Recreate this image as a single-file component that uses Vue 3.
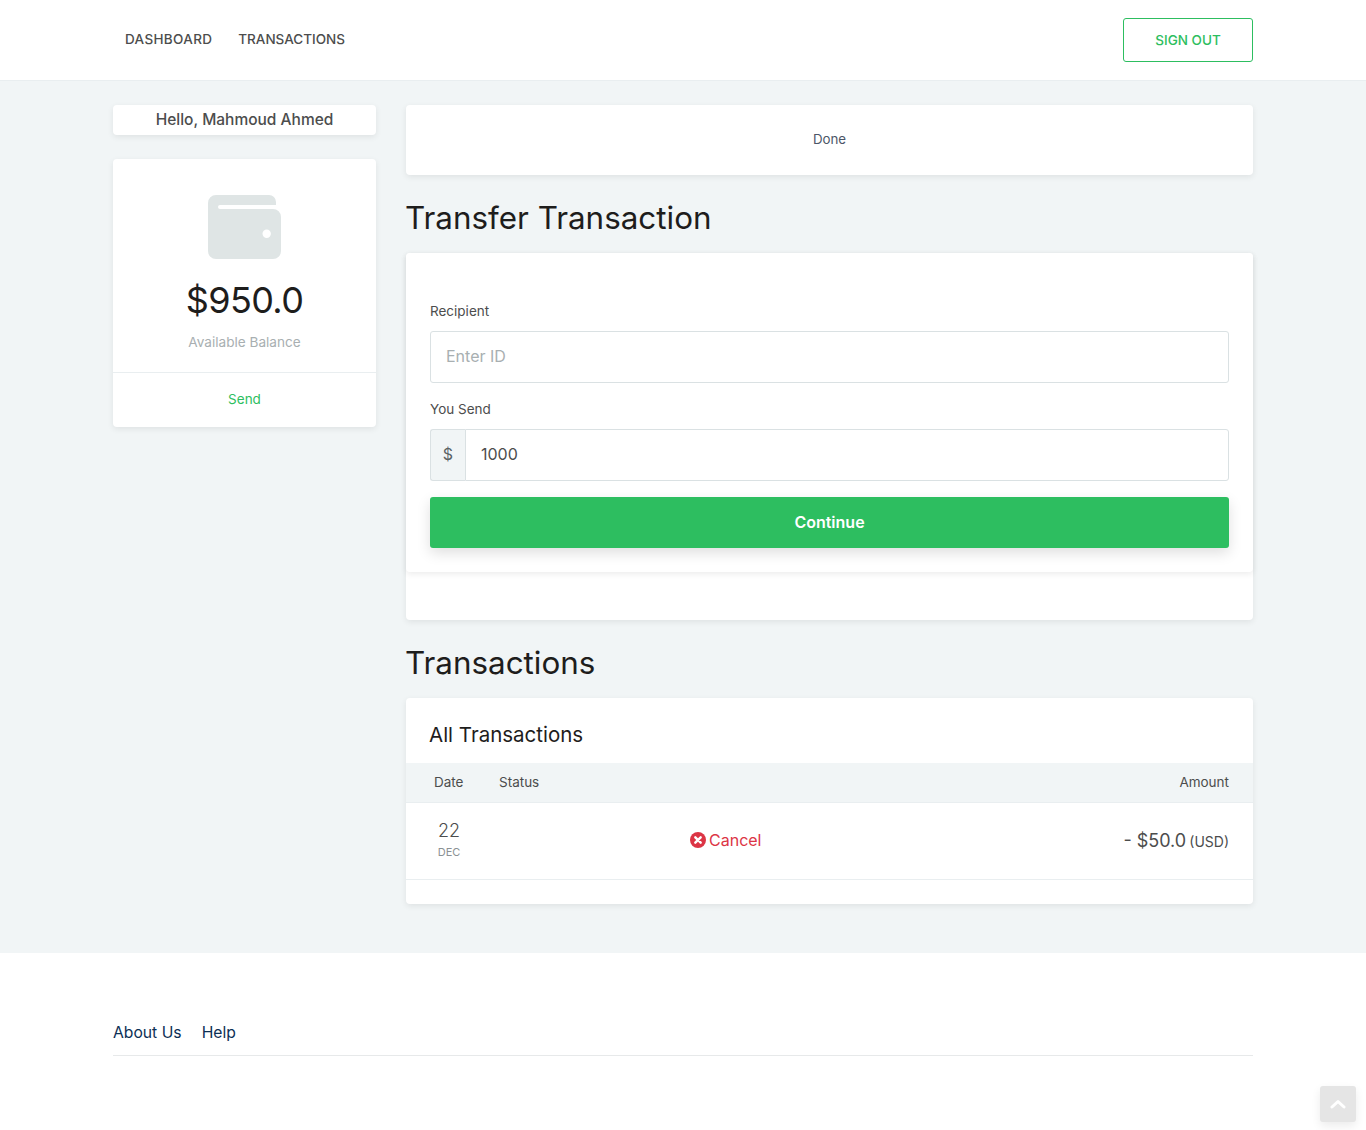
<script setup>
const nav = ['DASHBOARD', 'TRANSACTIONS']
</script>

<template>
  <div class="page">
    <header class="top">
      <div class="wrap top-in">
        <nav class="nav">
          <a v-for="n in nav" :key="n">{{ n }}</a>
        </nav>
        <button class="signout">SIGN OUT</button>
      </div>
    </header>

    <main class="main">
      <div class="wrap cols">
        <aside class="side">
          <div class="card hello">Hello, Mahmoud Ahmed</div>
          <div class="card balance">
            <div class="bal-top">
              <svg class="wallet" width="73" height="64" viewBox="0 0 73 64">
                <path fill="#dfe5e5" d="M8 0H61a7 7 0 0 1 7 7v3H12a2 2 0 0 0 0 4H65a8 8 0 0 1 8 8V56a8 8 0 0 1-8 8H8a8 8 0 0 1-8-8V8a8 8 0 0 1 8-8z"/>
                <circle cx="58.700" cy="38.700" r="4.200" fill="#fff"/>
              </svg>
              <div class="amount">$950.0</div>
              <div class="avail">Available Balance</div>
            </div>
            <a class="send">Send</a>
          </div>
        </aside>

        <section class="content">
          <div class="card done">Done</div>
          <h2 class="title">Transfer Transaction</h2>
          <div class="card outer">
            <form class="card form" @submit.prevent>
              <label class="lbl">Recipient</label>
              <input class="input" placeholder="Enter ID" />
              <label class="lbl second">You Send</label>
              <div class="group">
                <span class="prefix">$</span>
                <input class="input in-group" value="1000" />
              </div>
              <button class="continue">Continue</button>
            </form>
          </div>

          <h2 class="title tx">Transactions</h2>
          <div class="card table">
            <h3 class="all">All Transactions</h3>
            <div class="thead">
              <span class="th-date">Date</span>
              <span class="th-status">Status</span>
              <span class="th-amount">Amount</span>
            </div>
            <div class="row">
              <div class="date">
                <div class="day">22</div>
                <div class="mon">DEC</div>
              </div>
              <div class="status">
                <svg width="16" height="16" viewBox="0 0 16 16">
                  <circle cx="8" cy="8" r="8" fill="#dc3545"/>
                  <path d="M5.300 5.300l5.400 5.400M10.700 5.300l-5.400 5.400" stroke="#fff" stroke-width="2.400" stroke-linecap="round"/>
                </svg>
                <span>Cancel</span>
              </div>
              <div class="amt">- $50.0 <small>(USD)</small></div>
            </div>
          </div>
        </section>
      </div>
    </main>

    <footer class="foot">
      <div class="wrap">
        <div class="links">
          <a>About Us</a>
          <a>Help</a>
        </div>
      </div>
    </footer>

    <a class="totop">
      <svg width="16" height="10" viewBox="0 0 16 10">
        <path d="M2 8l6-5.500L14 8" fill="none" stroke="#fff" stroke-width="3" stroke-linecap="round" stroke-linejoin="round"/>
      </svg>
    </a>
  </div>
</template>

<style scoped>
.page { font-family: Inter, "Noto Sans", sans-serif; color: #4c4d4d; min-height: 1130px; background: #fff; position: relative; overflow: hidden; }
.wrap { width: 1140px; margin: 0 auto; }
.top { height: 80px; border-bottom: 1px solid #e9eef0; background: #fff; box-sizing: content-box; }
.top-in { display: flex; justify-content: space-between; align-items: center; height: 80px; }
.nav { display: flex; gap: 26px; padding-left: 12px; margin-top: -2px; }
.nav a { font-size: 13.500px; font-weight: 500; color: #4c4d4d; }
.nav a:first-child { letter-spacing: .33px; }
.signout { width: 130px; height: 44px; border: 1px solid #2dbe60; border-radius: 3px; background: #fff; color: #2dbe60; font: 500 13.500px Inter, sans-serif; }
.main { background: #f1f5f6; padding: 24px 0 49px; }
.cols { display: grid; grid-template-columns: 263px 847px; column-gap: 30px; align-items: start; }
.card { background: #fff; border-radius: 4px; box-shadow: 0 2px 6px rgba(0, 0, 0, .08); }
.hello { height: 30px; line-height: 29px; text-align: center; font-size: 15.500px; font-weight: 500; color: #4c4d4d; }
.balance { margin-top: 24px; }
.bal-top { height: 214px; box-sizing: border-box; padding-top: 36px; text-align: center; border-bottom: 1px solid #e9eef0; }
.wallet { display: block; margin: 0 auto; }
.amount { font-size: 36px; line-height: 43px; color: #1e1d1c; margin-top: 20px; letter-spacing: -.6px; }
.avail { font-size: 13.600px; line-height: 20px; color: #a8afb1; margin-top: 10px; }
.send { display: block; height: 54px; line-height: 53px; text-align: center; font-size: 13.500px; color: #2dbe60; }
.done { height: 70px; line-height: 68px; text-align: center; font-size: 13.300px; color: #4c5667; }
.title { margin: 0 0 0 -1px; font-size: 31.400px; font-weight: 400; line-height: 38px; color: #1e1d1c; padding: 24px 0 16px; }
.outer { height: 367px; }
.form { height: 319px; box-sizing: border-box; padding: 50px 24px 0; display: flex; flex-direction: column; }
.lbl { font-size: 13.500px; line-height: 16px; color: #4c4d4d; height: 28px; }
.second { margin-top: 18px; }
.input { height: 52px; box-sizing: border-box; border: 1px solid #dae1e3; border-radius: 3px; padding: 0 15px 2px; font: 16px Inter, sans-serif; color: #4c4d4d; outline: none; width: 100%; background: #fff; }
.input::placeholder { color: #a8afb1; opacity: 1; }
.group { display: flex; height: 52px; }
.prefix { width: 35px; flex-shrink: 0; box-sizing: border-box; border: 1px solid #dae1e3; border-right: 0; border-radius: 3px 0 0 3px; background: #f1f5f6; display: flex; align-items: center; justify-content: center; font-size: 16px; color: #5b6265; padding-bottom: 2px; }
.in-group { border-radius: 0 3px 3px 0; padding-left: 15px; }
.continue { margin-top: 16px; height: 51px; width: 100%; border: 0; border-radius: 3px; background: #2dbe60; color: #fff; font: 600 16px Inter, sans-serif; padding: 0 0 2px; box-shadow: 0 5px 14px rgba(0, 0, 0, .13); }
.tx { padding-top: 24px; }
.table { height: 206px; }
.all { margin: 0 0 0 -1px; height: 65px; box-sizing: border-box; padding: 24px 24px 0; font-size: 20.500px; line-height: 26px; font-weight: 400; color: #1e1d1c; }
.thead { height: 40px; box-sizing: border-box; background: #f1f5f6; border-bottom: 1px solid #e9eef0; display: flex; align-items: center; font-size: 13.500px; color: #4c4d4d; padding: 0 24px 2px 0; }
.th-date { width: 93px; padding-left: 28px; box-sizing: border-box; }
.th-amount { margin-left: auto; }
.row { height: 77px; box-sizing: border-box; border-bottom: 1px solid #e9eef0; display: flex; align-items: center; padding: 0 24px 2px 0; }
.date { width: 86px; text-align: center; margin-top: -2px; }
.day { font-size: 18px; line-height: 22px; color: #4c4d4d; font-weight: 300; }
.mon { font-size: 11px; line-height: 14px; color: #8b9194; margin-top: 3px; }
.status { margin-left: 198px; display: flex; align-items: center; gap: 3px; color: #dc3545; font-size: 16px; }
.amt { margin-left: auto; font-size: 18px; color: #4c4d4d; }
.amt small { font-size: 14px; margin-left: -2px; }
.foot { background: #fff; padding-top: 64px; }
.links { display: flex; gap: 20px; height: 38px; border-bottom: 1px solid #e7e9ea; font-size: 15.700px; line-height: 32px; color: #0c2f55; }
.totop { position: absolute; left: 1320px; top: 1086px; width: 36px; height: 36px; border-radius: 3px; background: #e5e5e5; display: flex; align-items: center; justify-content: center; box-shadow: 0 4px 10px rgba(0, 0, 0, .08); }
</style>
